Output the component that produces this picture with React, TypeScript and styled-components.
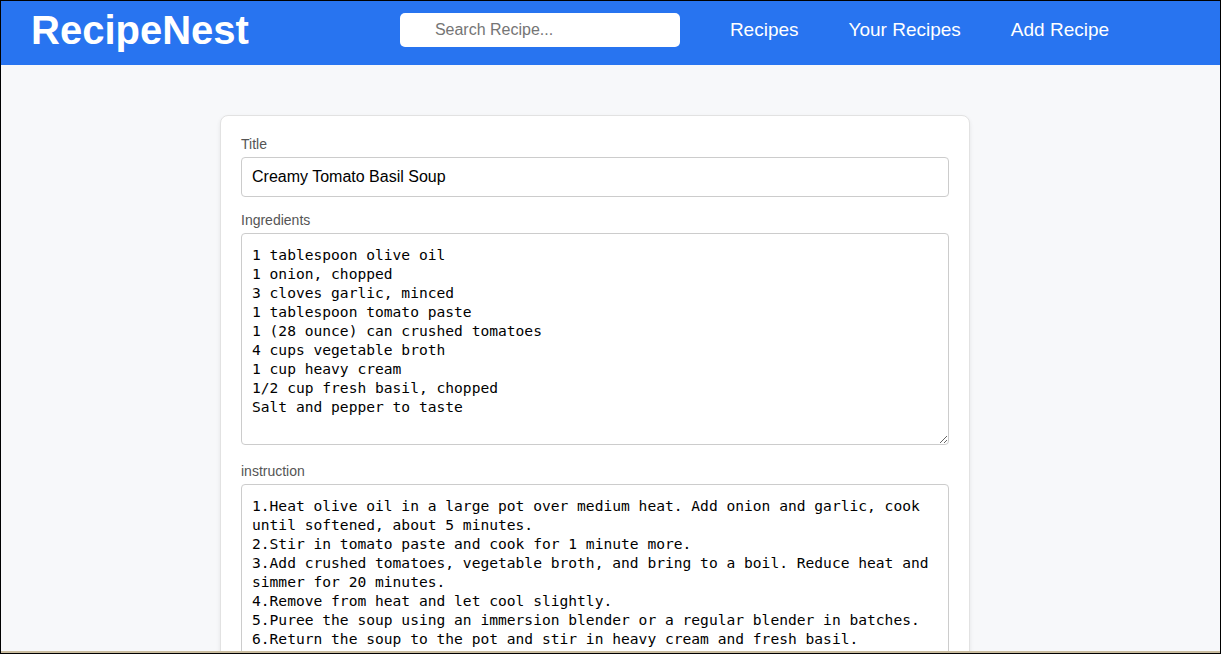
import styled, { createGlobalStyle } from "styled-components";

const GlobalStyle = createGlobalStyle`
  html, body {
    margin: 0;
    padding: 0;
    overflow: hidden;
  }
  * {
    box-sizing: border-box;
  }
`;

const ingredients = `1 tablespoon olive oil
1 onion, chopped
3 cloves garlic, minced
1 tablespoon tomato paste
1 (28 ounce) can crushed tomatoes
4 cups vegetable broth
1 cup heavy cream
1/2 cup fresh basil, chopped
Salt and pepper to taste`;

const instructions = `1.Heat olive oil in a large pot over medium heat. Add onion and garlic, cook until softened, about 5 minutes.
2.Stir in tomato paste and cook for 1 minute more.
3.Add crushed tomatoes, vegetable broth, and bring to a boil. Reduce heat and simmer for 20 minutes.
4.Remove from heat and let cool slightly.
5.Puree the soup using an immersion blender or a regular blender in batches.
6.Return the soup to the pot and stir in heavy cream and fresh basil.
7.Season with salt and pepper to taste. Serve hot.`;

export default function App() {
  return (
    <>
      <GlobalStyle />
      <Frame>
        <Header>
          <Logo>RecipeNest</Logo>
          <Search placeholder="Search Recipe..." />
          <Nav>
            <NavLink>Recipes</NavLink>
            <NavLink>Your Recipes</NavLink>
            <NavLink>Add Recipe</NavLink>
          </Nav>
        </Header>
        <Main>
          <Card>
            <Label>Title</Label>
            <TextInput defaultValue="Creamy Tomato Basil Soup" />
            <Label>Ingredients</Label>
            <TextArea defaultValue={ingredients} $height={212} />
            <Label>instruction</Label>
            <TextArea defaultValue={instructions} $height={260} />
          </Card>
        </Main>
        <BottomEdge />
      </Frame>
    </>
  );
}

const Frame = styled.div`
  height: 100vh;
  display: flex;
  flex-direction: column;
  border: 1px solid #000;
  background-color: #f7f8fa;
  overflow: hidden;
`;

const Header = styled.header`
  flex: 0 0 64px;
  display: flex;
  align-items: center;
  padding: 0 30px 7px 30px;
  background-color: #2874f0;
`;

const Logo = styled.h1`
  margin: 0;
  color: white;
  font-family: "Liberation Sans", Arial, sans-serif;
  font-weight: 700;
  font-size: 40px;
  line-height: 46px;
`;

const Search = styled.input`
  width: 280px;
  height: 34px;
  margin-left: 151px;
  padding: 0 10px 0 35px;
  border: none;
  border-radius: 5px;
  background: white;
  font-family: "Liberation Sans", Arial, sans-serif;
  font-size: 16px;
  outline: none;

  ::placeholder {
    color: #757575;
  }
`;

const Nav = styled.nav`
  display: flex;
  gap: 50px;
  margin-left: 50px;
`;

const NavLink = styled.a`
  color: white;
  font-family: "Liberation Sans", Arial, sans-serif;
  font-size: 19px;
  cursor: pointer;
`;

const Main = styled.main`
  flex: 1;
  overflow: hidden;
  padding-top: 50px;
`;

const Card = styled.div`
  width: 750px;
  margin-left: 219px;
  padding: 20px 20px;
  background-color: white;
  border: 1px solid #e2e2e2;
  border-radius: 8px;
  box-shadow: 0 2px 4px rgba(0, 0, 0, 0.08);
  display: flex;
  flex-direction: column;
`;

const Label = styled.label`
  display: block;
  color: #555;
  font-family: "Liberation Sans", Arial, sans-serif;
  font-size: 14px;
  line-height: 16px;
  margin-bottom: 5px;
`;

const TextInput = styled.input`
  width: 100%;
  height: 40px;
  padding: 10px;
  margin-bottom: 15px;
  border: 1px solid #ccc;
  border-radius: 4px;
  font-family: "Liberation Sans", Arial, sans-serif;
  font-size: 16px;
  color: #000;
  outline: none;
`;

const TextArea = styled.textarea<{ $height: number }>`
  display: block;
  width: 100%;
  height: ${(props) => props.$height}px;
  padding: 11px 10px 10px;
  margin-bottom: 18px;
  border: 1px solid #ccc;
  border-radius: 4px;
  font-family: "DejaVu Sans Mono", "Liberation Mono", monospace;
  font-size: 14.6px;
  line-height: 19px;
  color: #000;
  resize: vertical;
  overflow: hidden;
  outline: none;
`;

const BottomEdge = styled.div`
  flex: 0 0 2px;
  background-color: #c9bc9f;
`;
